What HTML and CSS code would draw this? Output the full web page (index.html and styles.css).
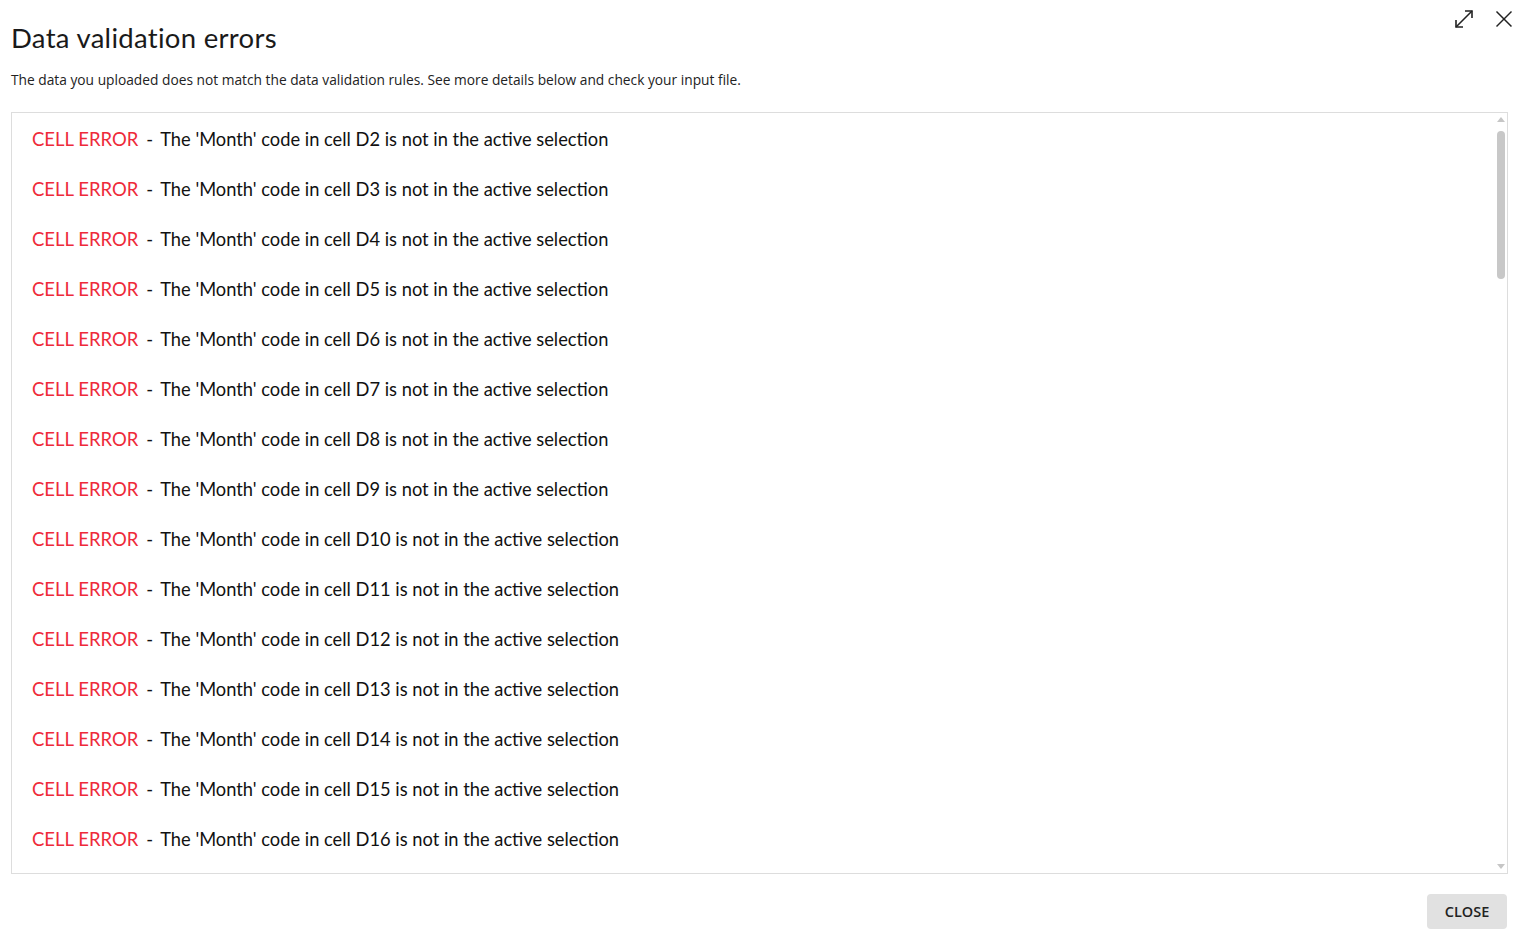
FILE: index.html
```html
<!DOCTYPE html>
<html lang="en">
<head>
<meta charset="UTF-8">
<meta name="viewport" content="width=device-width, initial-scale=1.0">
<title>Data validation errors</title>
<link rel="stylesheet" href="styles.css">
</head>
<body>

<div class="dialog">
    <!-- Header with title and window controls -->
    <div class="dialog-header">
        <h1 class="dialog-title">Data validation errors</h1>
        <div class="dialog-tools">
            <button class="icon-btn" type="button" title="Expand">
                <svg width="20" height="20" viewBox="0 0 20 20" fill="none" stroke="#222" stroke-width="1.6">
                    <path d="M2 18 L18 2"/>
                    <path d="M11 2 H18 V9"/>
                    <path d="M2 11 V18 H9"/>
                </svg>
            </button>
            <button class="icon-btn" type="button" title="Close">
                <svg width="18" height="18" viewBox="0 0 18 18" fill="none" stroke="#222" stroke-width="1.5">
                    <path d="M1.5 1.5 L16.5 16.5"/>
                    <path d="M16.5 1.5 L1.5 16.5"/>
                </svg>
            </button>
        </div>
    </div>

    <p class="dialog-intro">The data you uploaded does not match the data validation rules. See more details below and check your input file.</p>

    <!-- List of errors -->
    <div class="error-box">
        <ul class="error-list">
            <li class="error-item"><span class="error-tag">CELL ERROR</span><span class="error-sep">-</span><span class="error-msg">The 'Month' code in cell D2 is not in the active selection</span></li>
            <li class="error-item"><span class="error-tag">CELL ERROR</span><span class="error-sep">-</span><span class="error-msg">The 'Month' code in cell D3 is not in the active selection</span></li>
            <li class="error-item"><span class="error-tag">CELL ERROR</span><span class="error-sep">-</span><span class="error-msg">The 'Month' code in cell D4 is not in the active selection</span></li>
            <li class="error-item"><span class="error-tag">CELL ERROR</span><span class="error-sep">-</span><span class="error-msg">The 'Month' code in cell D5 is not in the active selection</span></li>
            <li class="error-item"><span class="error-tag">CELL ERROR</span><span class="error-sep">-</span><span class="error-msg">The 'Month' code in cell D6 is not in the active selection</span></li>
            <li class="error-item"><span class="error-tag">CELL ERROR</span><span class="error-sep">-</span><span class="error-msg">The 'Month' code in cell D7 is not in the active selection</span></li>
            <li class="error-item"><span class="error-tag">CELL ERROR</span><span class="error-sep">-</span><span class="error-msg">The 'Month' code in cell D8 is not in the active selection</span></li>
            <li class="error-item"><span class="error-tag">CELL ERROR</span><span class="error-sep">-</span><span class="error-msg">The 'Month' code in cell D9 is not in the active selection</span></li>
            <li class="error-item"><span class="error-tag">CELL ERROR</span><span class="error-sep">-</span><span class="error-msg">The 'Month' code in cell D10 is not in the active selection</span></li>
            <li class="error-item"><span class="error-tag">CELL ERROR</span><span class="error-sep">-</span><span class="error-msg">The 'Month' code in cell D11 is not in the active selection</span></li>
            <li class="error-item"><span class="error-tag">CELL ERROR</span><span class="error-sep">-</span><span class="error-msg">The 'Month' code in cell D12 is not in the active selection</span></li>
            <li class="error-item"><span class="error-tag">CELL ERROR</span><span class="error-sep">-</span><span class="error-msg">The 'Month' code in cell D13 is not in the active selection</span></li>
            <li class="error-item"><span class="error-tag">CELL ERROR</span><span class="error-sep">-</span><span class="error-msg">The 'Month' code in cell D14 is not in the active selection</span></li>
            <li class="error-item"><span class="error-tag">CELL ERROR</span><span class="error-sep">-</span><span class="error-msg">The 'Month' code in cell D15 is not in the active selection</span></li>
            <li class="error-item"><span class="error-tag">CELL ERROR</span><span class="error-sep">-</span><span class="error-msg">The 'Month' code in cell D16 is not in the active selection</span></li>
        </ul>

        <!-- Scrollbar drawn over the right edge of the list -->
        <div class="scrollbar">
            <span class="scroll-arrow up"></span>
            <div class="scroll-track">
                <div class="scroll-thumb"></div>
            </div>
            <span class="scroll-arrow down"></span>
        </div>
    </div>

    <div class="dialog-footer">
        <button class="close-btn" type="button">CLOSE</button>
    </div>
</div>

</body>
</html>
```

FILE: styles.css
```css
/* Dialog layout */
body {
    margin: 0;
    background-color: #fff;
    font-family: "Open Sans", Arial, sans-serif;
    color: #222;
}
.dialog {
    display: flex;
    flex-direction: column;
    height: 932px;
    padding: 0 12px 0 11px;
    box-sizing: border-box;
}
.dialog-header {
    display: flex;
    justify-content: space-between;
    align-items: flex-start;
}
.dialog-title {
    margin: 21px 0 0;
    font-family: Lato, sans-serif;
    font-weight: 400;
    font-size: 27.5px;
    line-height: 34px;
    color: #1a1a1a;
    letter-spacing: 0.3px;
}
.dialog-tools {
    display: flex;
    gap: 21px;
    margin-top: 9px;
    margin-right: -5px;
}
.icon-btn {
    padding: 0;
    border: none;
    background: none;
    cursor: pointer;
    line-height: 0;
}
.dialog-intro {
    margin: 15px 0 0;
    font-size: 13.75px;
    line-height: 20px;
    color: #222;
}
.error-box {
    position: relative;
    margin-top: 22px;
    height: 762px;
    border: 1px solid #ddd;
    box-sizing: border-box;
    overflow: hidden;
}
.error-list {
    list-style: none;
    margin: 0;
    padding: 1px 0 0 20px;
}
.error-item {
    height: 50px;
    display: flex;
    align-items: center;
    font-family: Lato, sans-serif;
    font-size: 18.5px;
    color: #111;
}
.error-tag {
    color: #ee2a3a;
}
.error-sep {
    margin: 0 7px 0 8px;
}
.error-msg {
    font-size: 18.3px;
}

/* Scrollbar */
.scrollbar {
    position: absolute;
    top: 0;
    right: 0;
    bottom: 0;
    width: 12px;
    display: flex;
    flex-direction: column;
    align-items: center;
    padding: 4px 0;
    box-sizing: border-box;
}
.scroll-arrow {
    width: 0;
    height: 0;
    border-left: 4px solid transparent;
    border-right: 4px solid transparent;
}
.scroll-arrow.up {
    border-bottom: 5px solid #c6c6c6;
}
.scroll-arrow.down {
    border-top: 5px solid #c6c6c6;
}
.scroll-track {
    flex: 1;
    padding: 9px 0;
}
.scroll-thumb {
    width: 8px;
    height: 148px;
    border-radius: 4px;
    background-color: #c8c8c8;
}

.dialog-footer {
    display: flex;
    justify-content: flex-end;
    padding-top: 20px;
    margin-right: 1px;
}
.close-btn {
    width: 80px;
    height: 35px;
    border: none;
    border-radius: 4px;
    background-color: #e1e1e1;
    color: #222;
    font-family: "Open Sans", Arial, sans-serif;
    font-size: 14.5px;
    font-weight: 600;
    cursor: pointer;
}
```
